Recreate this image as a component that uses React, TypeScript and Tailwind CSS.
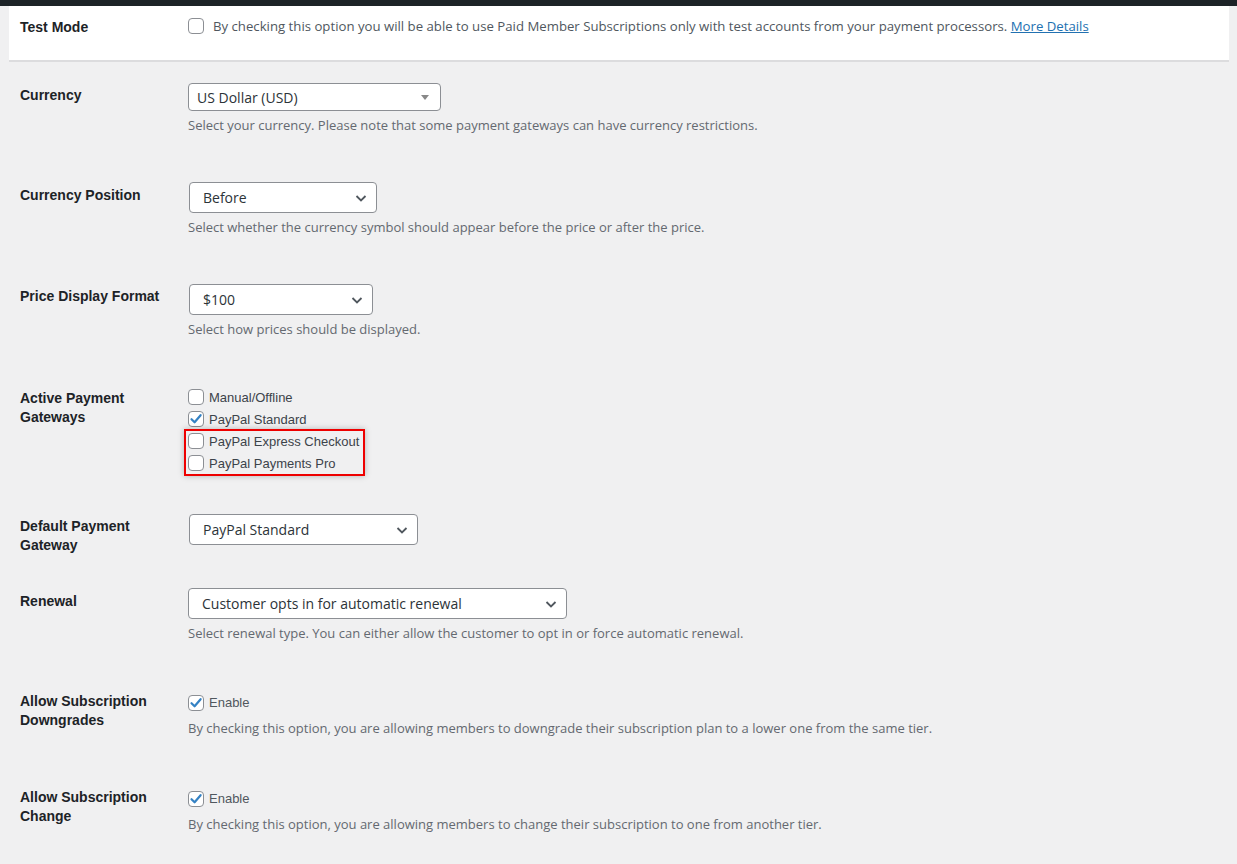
import React from "react";

const font = { fontFamily: '"Liberation Sans", Arial, sans-serif' };
const open = { fontFamily: '"Open Sans", "Liberation Sans", sans-serif' };

const Check = ({ checked }: { checked?: boolean }) => (
    <span className="w-[16px] h-[16px] shrink-0 rounded-[4px] border border-[#8c8f94] bg-white flex items-center justify-center">
        {checked && (
            <svg width="14" height="14" viewBox="0 0 14 14">
                <path
                    d="M2.5 7.2 L5.6 10.3 L11.6 3.2"
                    fill="none"
                    stroke="#3582c4"
                    strokeWidth="2.2"
                    strokeLinecap="round"
                    strokeLinejoin="round"
                />
            </svg>
        )}
    </span>
);

const Chevron = () => (
    <svg
        width="16"
        height="16"
        viewBox="0 0 16 16"
        className="absolute right-[7px] top-1/2 -translate-y-1/2"
    >
        <path
            d="M3.5 6 L8 10.5 L12.5 6"
            fill="none"
            stroke="#50575e"
            strokeWidth="1.8"
        />
    </svg>
);

const Select = ({ value, width }: { value: string; width: string }) => (
    <div
        style={open}
        className={`relative ml-px h-[31px] ${width} rounded-[4px] border border-[#8c8f94] bg-white flex items-center pl-[13px] text-[14px] text-[#2c3338]`}
    >
        {value}
        <Chevron />
    </div>
);

const Desc = ({ children, mt = "mt-[5px]" }: { children: React.ReactNode; mt?: string }) => (
    <p style={open} className={`${mt} text-[13px] leading-[19px] text-[#646970]`}>
        {children}
    </p>
);

const Label = ({ children, pt }: { children: React.ReactNode; pt: string }) => (
    <div
        className={`w-[188px] shrink-0 pl-[20px] ${pt} text-[14px] leading-[19px] font-bold text-[#1d2327]`}
    >
        {children}
    </div>
);

const Item = ({ text, checked }: { text: string; checked?: boolean }) => (
    <div className="h-[22px] flex items-center gap-[5px] text-[13px] text-[#3c434a]">
        <Check checked={checked} />
        <span className="pt-[2px]">{text}</span>
    </div>
);

const Enable = () => (
    <div className="flex items-center gap-[5px] mt-[3px] text-[13px] leading-[16px] text-[#50575e]">
        <Check checked />
        <span>Enable</span>
    </div>
);

export default function App() {
    return (
        <div className="min-h-screen bg-[#f0f0f1]" style={font}>
            <div className="h-[6px] bg-[#1d2327]" />

            {/* test mode */}
            <div className="ml-[9px] mr-[8px] h-[56px] bg-white border-b-2 border-[#dcdcde] flex pt-[11px]">
                <div className="w-[179px] shrink-0 pl-[11px] pt-px text-[14px] leading-[19px] font-bold text-[#1d2327]">
                    Test Mode
                </div>
                <div
                    style={open}
                    className="flex items-start gap-[9px] text-[13.2px] leading-[19px] text-[#50575e]"
                >
                    <span className="mt-px">
                        <Check />
                    </span>
                    <span>
                        By checking this option you will be able to use Paid
                        Member Subscriptions only with test accounts from your
                        payment processors.{" "}
                        <a href="#" className="text-[#2271b1] underline">
                            More Details
                        </a>
                    </span>
                </div>
            </div>

            <div className="pt-[21px]">
                {/* currency */}
                <div className="flex h-[99px]">
                    <Label pt="pt-[3px]">Currency</Label>
                    <div>
                        <div
                            style={open}
                            className="relative h-[28px] w-[253px] rounded-[4px] border border-[#8c8f94] bg-white flex items-center pl-[8px] text-[14px] text-[#2c3338]"
                        >
                            US Dollar (USD)
                            <span className="absolute right-[11px] top-[11px] w-0 h-0 border-l-[4px] border-r-[4px] border-t-[5px] border-l-transparent border-r-transparent border-t-[#888]" />
                        </div>
                        <Desc>
                            Select your currency. Please note that some payment
                            gateways can have currency restrictions.
                        </Desc>
                    </div>
                </div>

                {/* currency position */}
                <div className="flex h-[102px]">
                    <Label pt="pt-[4px]">Currency Position</Label>
                    <div>
                        <Select value="Before" width="w-[188px]" />
                        <Desc>
                            Select whether the currency symbol should appear
                            before the price or after the price.
                        </Desc>
                    </div>
                </div>

                {/* price format */}
                <div className="flex h-[102px]">
                    <Label pt="pt-[3px]">Price Display Format</Label>
                    <div>
                        <Select value="$100" width="w-[184px]" />
                        <Desc>Select how prices should be displayed.</Desc>
                    </div>
                </div>

                {/* gateways */}
                <div className="flex h-[128px]">
                    <Label pt="pt-[3px]">
                        Active Payment
                        <br />
                        Gateways
                    </Label>
                    <div>
                        <Item text="Manual/Offline" />
                        <Item text="PayPal Standard" checked />
                        <div className="relative">
                            <Item text="PayPal Express Checkout" />
                            <Item text="PayPal Payments Pro" />
                            <div className="absolute -left-[4px] -top-[1px] w-[181px] h-[47px] border-2 border-[#ee0000] shadow-[0_0_6px_rgba(0,0,0,0.25)]" />
                        </div>
                    </div>
                </div>

                {/* default gateway */}
                <div className="flex h-[74px]">
                    <Label pt="pt-[3px]">
                        Default Payment
                        <br />
                        Gateway
                    </Label>
                    <Select value="PayPal Standard" width="w-[229px]" />
                </div>

                {/* renewal */}
                <div className="flex h-[104px]">
                    <Label pt="pt-[4px]">Renewal</Label>
                    <div>
                        <div className="-ml-px">
                            <Select
                                value="Customer opts in for automatic renewal"
                                width="w-[379px]"
                            />
                        </div>
                        <Desc>
                            Select renewal type. You can either allow the
                            customer to opt in or force automatic renewal.
                        </Desc>
                    </div>
                </div>

                {/* downgrades */}
                <div className="flex h-[96px]">
                    <Label pt="pt-0">
                        Allow Subscription
                        <br />
                        Downgrades
                    </Label>
                    <div>
                        <Enable />
                        <Desc mt="mt-[8px]">
                            By checking this option, you are allowing members to
                            downgrade their subscription plan to a lower one from
                            the same tier.
                        </Desc>
                    </div>
                </div>

                {/* change */}
                <div className="flex h-[76px]">
                    <Label pt="pt-0">
                        Allow Subscription
                        <br />
                        Change
                    </Label>
                    <div>
                        <Enable />
                        <Desc mt="mt-[8px]">
                            By checking this option, you are allowing members to
                            change their subscription to one from another tier.
                        </Desc>
                    </div>
                </div>
            </div>
        </div>
    );
}
